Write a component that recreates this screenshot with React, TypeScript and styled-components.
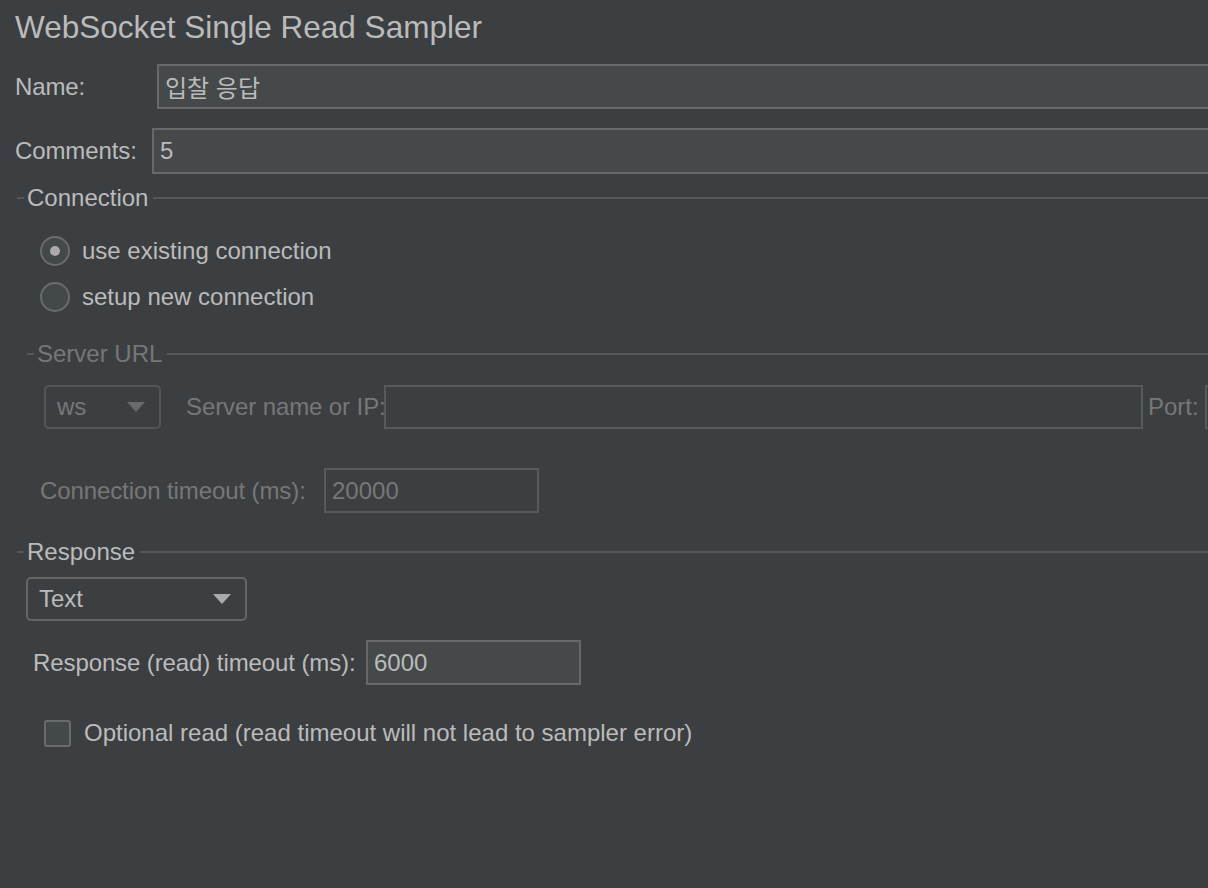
import React from 'react';
import styled, { createGlobalStyle } from 'styled-components';

const GlobalStyle = createGlobalStyle`
  html, body {
    margin: 0;
    padding: 0;
    background: #3c3f41;
  }
  body {
    font-family: "Liberation Sans", Arial, "Noto Sans CJK KR", sans-serif;
    color: #bbbbbb;
  }
`;

const Page = styled.div`
  width: 1208px;
  height: 888px;
  overflow: hidden;
  background: #3c3f41;
  display: flex;
  flex-direction: column;
  font-size: 24px;
`;

const Title = styled.h1`
  margin: 0;
  padding-left: 15px;
  height: 54px;
  line-height: 54px;
  font-size: 31.5px;
  font-weight: 400;
  color: #bbbbbb;
  white-space: nowrap;
`;

const FieldRow = styled.div<{ $top: number; $left?: number }>`
  display: flex;
  align-items: center;
  margin-top: ${({ $top }) => $top}px;
  padding-left: ${({ $left = 0 }) => $left}px;
  white-space: nowrap;
`;

const Label = styled.span<{ $width?: number; $disabled?: boolean; $gap?: number; $indent?: number }>`
  flex: none;
  ${({ $width }) => ($width ? `width: ${$width}px;` : '')}
  margin-left: ${({ $indent = 0 }) => $indent}px;
  margin-right: ${({ $gap = 0 }) => $gap}px;
  letter-spacing: ${({ $width }) => ($width ? '-0.1px' : '0')};
  color: ${({ $disabled }) => ($disabled ? '#777777' : '#bbbbbb')};
`;

const TextField = styled.div<{ $width?: number; $height?: number; $disabled?: boolean; $grow?: boolean }>`
  box-sizing: border-box;
  flex: ${({ $grow }) => ($grow ? '1 1 auto' : 'none')};
  ${({ $width }) => ($width ? `width: ${$width}px;` : '')}
  height: ${({ $height = 45 }) => $height}px;
  display: flex;
  align-items: center;
  padding-left: 6px;
  border: 2px solid ${({ $disabled }) => ($disabled ? '#595959' : '#686868')};
  background: ${({ $disabled }) => ($disabled ? '#3c3f41' : '#45494a')};
  color: ${({ $disabled }) => ($disabled ? '#777777' : '#bbbbbb')};
  font-family: "Liberation Sans", Arial, "Noto Sans CJK KR", sans-serif;
`;

const Bleed = styled.div`
  flex: 1 1 auto;
  display: flex;
  margin-right: -40px;
`;

const SectionHeader = styled.div<{ $top: number; $left: number; $disabled?: boolean }>`
  display: flex;
  align-items: center;
  height: 24px;
  margin-top: ${({ $top }) => $top}px;
  padding-left: ${({ $left }) => $left}px;
  color: ${({ $disabled }) => ($disabled ? '#777777' : '#bbbbbb')};
  white-space: nowrap;

  &::before {
    content: '';
    width: 7px;
    height: 2px;
    background: #575757;
  }

  &::after {
    content: '';
    flex: 1;
    height: 2px;
    background: #575757;
  }
`;

const SectionTitle = styled.span`
  padding: 0 5px 0 3px;
`;

const RadioRow = styled.label<{ $top: number }>`
  display: flex;
  align-items: center;
  height: 40px;
  margin-top: ${({ $top }) => $top}px;
  padding-left: 40px;
  gap: 12px;
  white-space: nowrap;
`;

const RadioCircle = styled.span<{ $checked?: boolean }>`
  box-sizing: border-box;
  width: 30px;
  height: 30px;
  border-radius: 50%;
  border: 2px solid #6b6b6b;
  background: #43494a;
  display: flex;
  align-items: center;
  justify-content: center;

  &::after {
    content: '';
    display: ${({ $checked }) => ($checked ? 'block' : 'none')};
    width: 10px;
    height: 10px;
    border-radius: 50%;
    background: #aaaaaa;
  }
`;

const Combo = styled.div<{ $width: number; $disabled?: boolean }>`
  box-sizing: border-box;
  flex: none;
  width: ${({ $width }) => $width}px;
  height: 44px;
  display: flex;
  align-items: center;
  justify-content: space-between;
  padding: 0 14px 0 11px;
  border: 2px solid ${({ $disabled }) => ($disabled ? '#555555' : '#656565')};
  border-radius: 5px;
  color: ${({ $disabled }) => ($disabled ? '#777777' : '#bbbbbb')};
`;

const Arrow = styled.span<{ $disabled?: boolean }>`
  width: 0;
  height: 0;
  border-left: 9px solid transparent;
  border-right: 9px solid transparent;
  border-top: 10px solid ${({ $disabled }) => ($disabled ? '#6a6a6a' : '#aaaaaa')};
`;

const CheckRow = styled.label<{ $top: number }>`
  display: flex;
  align-items: center;
  height: 40px;
  margin-top: ${({ $top }) => $top}px;
  padding-left: 44px;
  gap: 13px;
  white-space: nowrap;
`;

const CheckBox = styled.span`
  box-sizing: border-box;
  width: 27px;
  height: 27px;
  border-radius: 3px;
  border: 2px solid #6b6b6b;
  background: #43494a;
`;

export default function App() {
  return (
    <>
      <GlobalStyle />
      <Page>
        <Title>WebSocket Single Read Sampler</Title>

        <FieldRow $top={10} $left={15}>
          <Label $width={142}>Name:</Label>
          <Bleed>
            <TextField $grow>입찰 응답</TextField>
          </Bleed>
        </FieldRow>

        <FieldRow $top={19} $left={15}>
          <Label $width={137}>Comments:</Label>
          <Bleed>
            <TextField $grow $height={46}>5</TextField>
          </Bleed>
        </FieldRow>

        <SectionHeader $top={12} $left={17}>
          <SectionTitle>Connection</SectionTitle>
        </SectionHeader>

        <RadioRow $top={21}>
          <RadioCircle $checked />
          <span>use existing connection</span>
        </RadioRow>
        <RadioRow $top={6}>
          <RadioCircle />
          <span>setup new connection</span>
        </RadioRow>

        <SectionHeader $top={25} $left={27} $disabled>
          <SectionTitle>Server URL</SectionTitle>
        </SectionHeader>

        <FieldRow $top={19} $left={44}>
          <Combo $width={117} $disabled>
            <span>ws</span>
            <Arrow $disabled />
          </Combo>
          <Label $disabled $width={198} $indent={25}>
            Server name or IP:
          </Label>
          <TextField $disabled $width={759} $height={44} />
          <Label $disabled $gap={5} $indent={5} style={{ width: 52 }}>
            Port:
          </Label>
          <Bleed>
            <TextField $disabled $grow $height={44} />
          </Bleed>
        </FieldRow>

        <FieldRow $top={39} $left={40}>
          <Label $disabled $width={284}>Connection timeout (ms):</Label>
          <TextField $disabled $width={215}>20000</TextField>
        </FieldRow>

        <SectionHeader $top={27} $left={17}>
          <SectionTitle>Response</SectionTitle>
        </SectionHeader>

        <FieldRow $top={13} $left={26}>
          <Combo $width={221}>
            <span>Text</span>
            <Arrow />
          </Combo>
        </FieldRow>

        <FieldRow $top={19} $left={33}>
          <Label $width={333}>Response (read) timeout (ms):</Label>
          <TextField $width={215}>6000</TextField>
        </FieldRow>

        <CheckRow $top={28}>
          <CheckBox />
          <span>Optional read (read timeout will not lead to sampler error)</span>
        </CheckRow>
      </Page>
    </>
  );
}
